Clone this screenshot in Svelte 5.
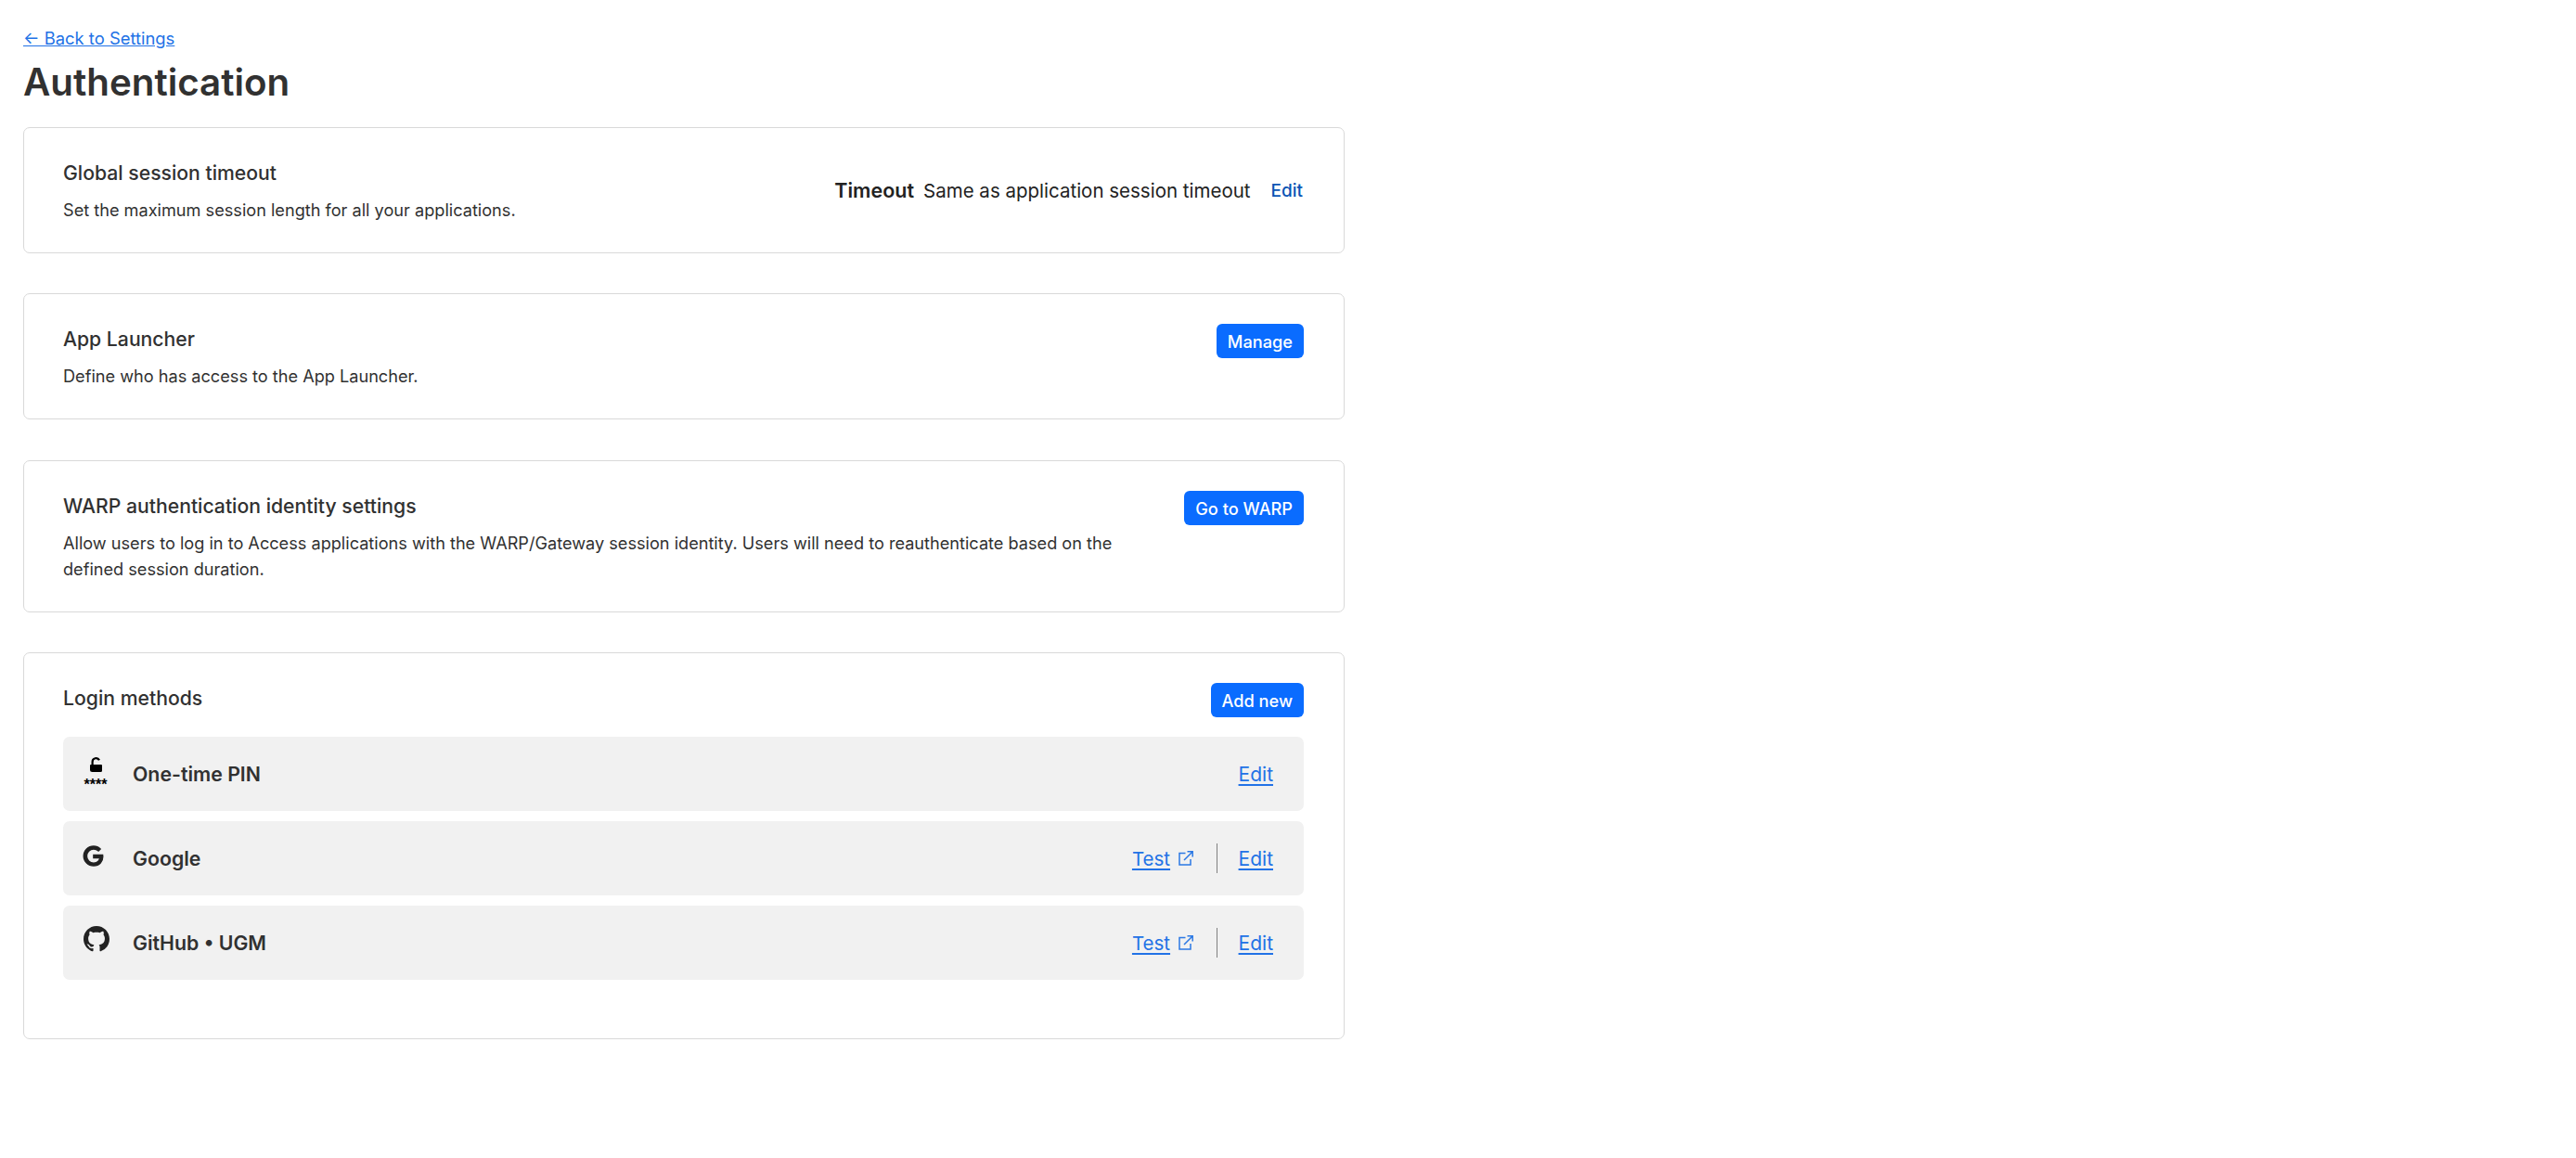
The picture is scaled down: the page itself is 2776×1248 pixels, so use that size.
<script>
  const cards = [
    {
      title: 'App Launcher',
      text: 'Define who has access to the App Launcher.',
      action: 'Manage'
    },
    {
      title: 'WARP authentication identity settings',
      text: 'Allow users to log in to Access applications with the WARP/Gateway session identity. Users will need to reauthenticate based on the defined session duration.',
      action: 'Go to WARP'
    }
  ];

  const methods = [
    { name: 'One-time PIN', icon: 'pin', test: false },
    { name: 'Google', icon: 'google', test: true },
    { name: 'GitHub • UGM', icon: 'github', test: true }
  ];
</script>

<main class="page">
  <a href="#back" class="back">← Back to Settings</a>
  <h1>Authentication</h1>

  <section class="card split">
    <div class="intro">
      <h2>Global session timeout</h2>
      <p>Set the maximum session length for all your applications.</p>
    </div>
    <div class="timeout">
      <strong>Timeout</strong>
      <span>Same as application session timeout</span>
      <a href="#edit">Edit</a>
    </div>
  </section>

  {#each cards as card}
    <section class="card split top">
      <div class="intro">
        <h2>{card.title}</h2>
        <p>{card.text}</p>
      </div>
      <button>{card.action}</button>
    </section>
  {/each}

  <section class="card login">
    <div class="login-head">
      <h2>Login methods</h2>
      <button>Add new</button>
    </div>

    <div class="methods">
      {#each methods as method}
        <div class="method">
          <div class="method-icon">
            {#if method.icon === 'pin'}
              <svg width="30" height="42" viewBox="0 0 30 42">
                <path d="M9.6 8V5.2a3.9 3.9 0 0 1 7.4-1.9" fill="none" stroke="#000" stroke-width="2.2" />
                <path d="M8 8h11a1 1 0 0 1 1 1v5.5a1.5 1.5 0 0 1-1.5 1.5H9.5A2.5 2.5 0 0 1 7 13.5V9a1 1 0 0 1 1-1z" fill="#000" />
                <text x="13" y="35" text-anchor="middle">****</text>
              </svg>
            {:else if method.icon === 'google'}
              <svg class="google" width="21" height="21" viewBox="0 0 24 24">
                <path fill="#222" stroke="#222" stroke-width="1.7" d="M12.48 10.92v3.28h7.84c-.24 1.84-.853 3.187-1.787 4.133-1.147 1.147-2.933 2.4-6.053 2.4-4.827 0-8.6-3.893-8.6-8.72s3.773-8.72 8.6-8.72c2.6 0 4.507 1.027 5.907 2.347l2.307-2.307C18.747 1.44 16.133 0 12.48 0 5.867 0 .307 5.387.307 12s5.56 12 12.173 12c3.573 0 6.267-1.173 8.373-3.36 2.16-2.16 2.84-5.213 2.84-7.667 0-.76-.053-1.467-.173-2.053H12.48z" />
              </svg>
            {:else}
              <svg width="28" height="28" viewBox="0 0 16 16">
                <path fill="#222" d="M8 0C3.58 0 0 3.58 0 8c0 3.54 2.29 6.53 5.47 7.59.4.07.55-.17.55-.38 0-.19-.01-.82-.01-1.49-2.01.37-2.53-.49-2.69-.94-.09-.23-.48-.94-.82-1.13-.28-.15-.68-.52-.01-.53.63-.01 1.08.58 1.23.82.72 1.21 1.87.87 2.33.66.07-.52.28-.87.51-1.07-1.78-.2-3.64-.89-3.64-3.95 0-.87.31-1.59.82-2.15-.08-.2-.36-1.02.08-2.12 0 0 .67-.21 2.2.82.64-.18 1.32-.27 2-.27.68 0 1.36.09 2 .27 1.53-1.04 2.2-.82 2.2-.82.44 1.1.16 1.92.08 2.12.51.56.82 1.27.82 2.15 0 3.07-1.87 3.75-3.65 3.95.29.25.54.73.54 1.48 0 1.07-.01 1.93-.01 2.2 0 .21.15.46.55.38A8.013 8.013 0 0016 8c0-4.42-3.58-8-8-8z" />
              </svg>
            {/if}
          </div>

          <span class="method-name">{method.name}</span>

          <div class="method-links">
            {#if method.test}
              <a href="#test" class="test">Test</a>
              <svg class="external" width="16" height="16" viewBox="0 0 16 16" fill="none" stroke="#2b78e4" stroke-width="1.5">
                <path d="M7.5 2.5H1v12.5h12V9" />
                <path d="M6 10 15 1M9.5 .8h5.7v5.7" />
              </svg>
              <div class="divider"></div>
            {/if}
            <a href="#edit">Edit</a>
          </div>
        </div>
      {/each}
    </div>
  </section>
</main>

<style>
  :global(body) {
    margin: 0;
    background: white;
    color: #313131;
    font-family: Inter, "Liberation Sans", sans-serif;
  }

  .page {
    width: 1424px;
    padding: 27px 0 0 25px;
    display: flex;
    flex-direction: column;
  }

  .back {
    align-self: flex-start;
    font-size: 18.4px;
    line-height: 28px;
    color: #2272e6;
  }

  h1 {
    margin: 6px 0 20px 0;
    font-size: 40.3px;
    line-height: 56px;
    font-weight: 600;
  }

  .card {
    box-sizing: border-box;
    border: 1px solid #d9d9d9;
    border-radius: 7px;
    padding: 32px 43px 32px 42px;
    margin-bottom: 43.4px;
  }

  .split {
    display: flex;
    justify-content: space-between;
    align-items: center;
    gap: 48px;
  }

  .split.top {
    align-items: flex-start;
  }

  h2 {
    margin: 0;
    font-size: 21.2px;
    line-height: 32px;
    font-weight: 500;
  }

  .intro p {
    margin: 10px 0 0 0;
    font-size: 18.15px;
    line-height: 28px;
  }

  .timeout {
    display: flex;
    align-items: center;
    white-space: nowrap;
    font-size: 20.5px;
    color: #222;
    margin-right: 1px;
  }

  .timeout strong {
    font-size: 21.5px;
    font-weight: 600;
    margin-right: 10px;
  }

  .timeout a {
    margin-left: 22px;
    font-size: 19px;
    font-weight: 500;
    color: #0a55b5;
    text-decoration: none;
  }

  button {
    flex: none;
    height: 37px;
    padding: 1px 12px 0 12px;
    border: none;
    border-radius: 6px;
    background: #0a6cff;
    color: white;
    font-family: inherit;
    font-size: 18.2px;
    font-weight: 500;
  }

  .login {
    padding-bottom: 63px;
    margin-bottom: 0;
  }

  .login-head {
    display: flex;
    justify-content: space-between;
    align-items: flex-start;
    margin-bottom: 21px;
  }

  .methods {
    display: flex;
    flex-direction: column;
    gap: 11px;
  }

  .method {
    height: 80px;
    display: flex;
    align-items: center;
    padding: 0 33px 0 22px;
    background: #f1f1f1;
    border-radius: 7px;
  }

  .method-icon {
    width: 53px;
    align-self: flex-start;
    padding-top: 22px;
  }

  .method-icon svg {
    display: block;
    overflow: visible;
  }

  .method-icon .google {
    margin-top: 5px;
  }

  .method-icon text {
    font-family: "Liberation Sans", sans-serif;
    font-size: 16px;
    font-weight: 700;
    fill: #000;
  }

  .method-name {
    flex: 1;
    font-size: 21.3px;
    font-weight: 600;
  }

  .method-links {
    display: flex;
    align-items: center;
    font-size: 21px;
  }

  .method-links a {
    color: #2272e6;
    text-decoration-thickness: 2px;
    text-underline-offset: 3px;
  }

  .method-links .test {
    font-size: 20.5px;
  }

  .external {
    margin-left: 9px;
  }

  .divider {
    width: 1px;
    height: 32px;
    margin: 0 22.5px 0 25px;
    background: #808080;
  }
</style>
